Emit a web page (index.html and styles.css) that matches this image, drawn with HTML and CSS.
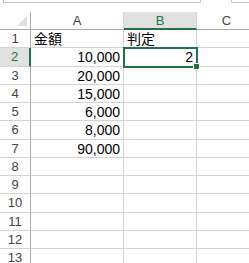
FILE: index.html
```
<!DOCTYPE html>
<html lang="ja">
<head>
    <meta charset="UTF-8">
    <title>判定</title>
    <link rel="stylesheet" href="styles.css">
</head>
<body>
    <div class="topbar">
        <div class="namebox"></div>
        <div class="formula"></div>
    </div>
    <div class="sheet">
        <div class="corner"><span class="tri"></span></div>
        <div class="colhead">A</div>
        <div class="colhead active">B</div>
        <div class="colhead last">C</div>

        <div class="rowhead">1</div>
        <div class="cell">金額</div>
        <div class="cell">判定</div>
        <div class="cell last"></div>

        <div class="rowhead active">2</div>
        <div class="cell num">10,000</div>
        <div class="cell num selected">2<span class="handle"></span></div>
        <div class="cell last"></div>

        <div class="rowhead">3</div>
        <div class="cell num">20,000</div>
        <div class="cell"></div>
        <div class="cell last"></div>

        <div class="rowhead">4</div>
        <div class="cell num">15,000</div>
        <div class="cell"></div>
        <div class="cell last"></div>

        <div class="rowhead">5</div>
        <div class="cell num">6,000</div>
        <div class="cell"></div>
        <div class="cell last"></div>

        <div class="rowhead">6</div>
        <div class="cell num">8,000</div>
        <div class="cell"></div>
        <div class="cell last"></div>

        <div class="rowhead">7</div>
        <div class="cell num">90,000</div>
        <div class="cell"></div>
        <div class="cell last"></div>

        <div class="rowhead">8</div>
        <div class="cell"></div>
        <div class="cell"></div>
        <div class="cell last"></div>

        <div class="rowhead">9</div>
        <div class="cell"></div>
        <div class="cell"></div>
        <div class="cell last"></div>

        <div class="rowhead">10</div>
        <div class="cell"></div>
        <div class="cell"></div>
        <div class="cell last"></div>

        <div class="rowhead">11</div>
        <div class="cell"></div>
        <div class="cell"></div>
        <div class="cell last"></div>

        <div class="rowhead">12</div>
        <div class="cell"></div>
        <div class="cell"></div>
        <div class="cell last"></div>

        <div class="rowhead">13</div>
        <div class="cell"></div>
        <div class="cell"></div>
        <div class="cell last"></div>
    </div>
</body>
</html>
```

FILE: styles.css
```
body {
    margin: 0;
    padding: 0;
    background: #fff;
    font-family: "Liberation Sans", "Noto Sans CJK JP", sans-serif;
    overflow: hidden;
}
.topbar {
    display: flex;
    height: 12px;
}
.namebox {
    width: 196px;
    height: 2px;
    margin-left: 3px;
    border: 1px solid #c6c6c6;
    border-top: none;
}
.formula {
    flex: 1;
    height: 2px;
    margin-left: 30px;
    border: 1px solid #c6c6c6;
    border-top: none;
    border-right: none;
}
.sheet {
    display: grid;
    grid-template-columns: 31px 93px 73px 60px;
    grid-template-rows: 18px;
    grid-auto-rows: 18.25px;
}
.sheet > div {
    box-sizing: border-box;
    border-right: 1px solid #d4d4d4;
    border-bottom: 1px solid #d4d4d4;
}
.corner {
    position: relative;
    border-right-color: #ababab !important;
    border-bottom-color: #ababab !important;
}
.tri {
    position: absolute;
    right: 3px;
    bottom: 3px;
    width: 0;
    height: 0;
    border-left: 10px solid transparent;
    border-bottom: 10px solid #dfdfdf;
}
.colhead {
    font-size: 13px;
    color: #444;
    text-align: center;
    line-height: 17px;
    border-bottom-color: #ababab !important;
}
.colhead.active {
    background: #e1e1e1;
    color: #217346;
    border-bottom: 2px solid #217346 !important;
}
.rowhead {
    font-size: 13px;
    color: #444;
    text-align: center;
    line-height: 18px;
    border-right-color: #ababab !important;
}
.rowhead.active {
    background: #e1e1e1;
    color: #217346;
    border-right: 2px solid #217346 !important;
}
.cell {
    font-size: 14px;
    color: #000;
    line-height: 18px;
    padding: 0 3px 0 3px;
    white-space: nowrap;
}
.cell.num {
    text-align: right;
}
.cell.last {
    border-right: none !important;
}
.selected {
    position: relative;
    outline: 2px solid #217346;
    outline-offset: -1px;
    z-index: 1;
}
.handle {
    position: absolute;
    right: -4px;
    bottom: -4px;
    width: 5px;
    height: 5px;
    background: #217346;
    border: 1px solid #fff;
}
```
